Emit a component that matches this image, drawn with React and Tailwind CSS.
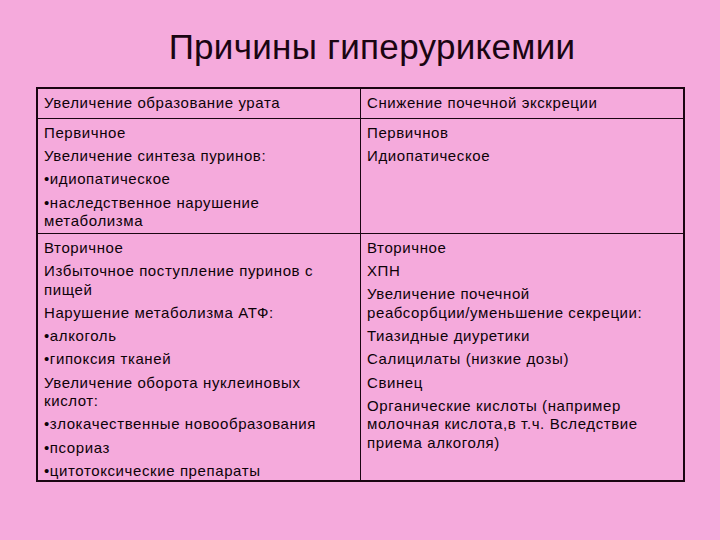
const rows = [
  {
    left: [["Увеличение образование урата"]],
    right: [["Снижение почечной экскреции"]],
  },
  {
    left: [
      ["Первичное"],
      ["Увеличение синтеза пуринов:"],
      ["•идиопатическое"],
      ["•наследственное нарушение", "метаболизма"],
    ],
    right: [["Первичнов"], ["Идиопатическое"]],
  },
  {
    left: [
      ["Вторичное"],
      ["Избыточное поступление пуринов с", "пищей"],
      ["Нарушение метаболизма АТФ:"],
      ["•алкоголь"],
      ["•гипоксия тканей"],
      ["Увеличение оборота нуклеиновых", "кислот:"],
      ["•злокачественные новообразования"],
      ["•псориаз"],
      ["•цитотоксические препараты"],
    ],
    right: [
      ["Вторичное"],
      ["ХПН"],
      ["Увеличение почечной", "реабсорбции/уменьшение секреции:"],
      ["Тиазидные диуретики"],
      ["Салицилаты (низкие дозы)"],
      ["Свинец"],
      ["Органические кислоты (например", "молочная кислота,в т.ч. Вследствие", "приема алкоголя)"],
    ],
  },
];

function Cell({ paras, className }) {
  return (
    <div className={className}>
      <div className="flex flex-col gap-[4.6px]">
        {paras.map((lines, i) => (
          <p key={i} className="leading-[18.6px]">
            {lines.map((line, j) => (
              <span key={j} className="block whitespace-nowrap">
                {line}
              </span>
            ))}
          </p>
        ))}
      </div>
    </div>
  );
}

export default function App() {
  return (
    <div className="w-[720px] h-[540px] bg-[#f5aadc] font-['Liberation_Sans',Arial,sans-serif] text-[#0d0208] overflow-hidden">
      {/* Title */}
      <h1 className="pt-[29px] pl-6 text-center text-[35px] leading-none tracking-[0.3px] text-[#1a0512]">
        Причины гиперурикемии
      </h1>

      {/* Table */}
      <div className="mt-[23px] ml-[36px] w-[649px] border-2 border-[#1a0512] text-[15px] tracking-[0.6px]">
        {rows.map((row, i) => (
          <div
            key={i}
            className={
              i === 0
                ? "grid grid-cols-[323px_1fr] border-b border-[#1a0512] h-[30px]"
                : i === 1
                ? "grid grid-cols-[323px_1fr] border-b border-[#1a0512] h-[115px]"
                : "grid grid-cols-[323px_1fr] h-[246px]"
            }
          >
            <Cell paras={row.left} className="border-r border-[#1a0512] pl-[6px] pt-[5px]" />
            <Cell paras={row.right} className="pl-[6px] pt-[5px]" />
          </div>
        ))}
      </div>
    </div>
  );
}
